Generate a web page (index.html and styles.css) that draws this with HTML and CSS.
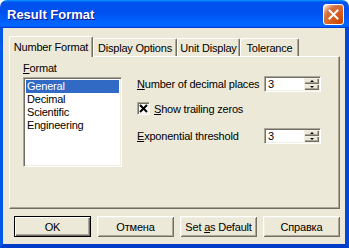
FILE: index.html
```html
<!DOCTYPE html>
<html>
<head>
<meta charset="utf-8">
<link rel="stylesheet" href="styles.css">
</head>
<body>
<div class="window">
  <div class="titlebar">
    <span class="title">Result Format</span>
    <div class="close">
      <svg width="11" height="11" viewBox="0 0 11 11"><path d="M1.5 1.5 L9.5 9.5 M9.5 1.5 L1.5 9.5" stroke="#fff" stroke-width="2" stroke-linecap="square"/></svg>
    </div>
  </div>
  <div class="client">
    <div class="tabs">
      <div class="tab active w1">Number Format</div>
      <div class="tab w2">Display Options</div>
      <div class="tab w3">Unit Display</div>
      <div class="tab w4">Tolerance</div>
    </div>
    <div class="panel">
      <div class="col-left">
        <div class="label"><u>F</u>ormat</div>
        <ul class="listbox">
          <li class="sel">General</li>
          <li>Decimal</li>
          <li>Scientific</li>
          <li>Engineering</li>
        </ul>
      </div>
      <div class="col-right">
        <div class="row">
          <span><u>N</u>umber of decimal places</span>
          <div class="spin"><span class="val">3</span><div class="spinbtns"><div class="sb up"></div><div class="sb down"></div></div></div>
        </div>
        <div class="check-row">
          <span class="checkbox"><svg width="9" height="9" viewBox="0 0 9 9"><path d="M1 1 L8 8 M8 1 L1 8" stroke="#000" stroke-width="2"/></svg></span>
          <span><u>S</u>how trailing zeros</span>
        </div>
        <div class="row row3">
          <span><u>E</u>xponential threshold</span>
          <div class="spin"><span class="val">3</span><div class="spinbtns"><div class="sb up"></div><div class="sb down"></div></div></div>
        </div>
      </div>
    </div>
    <div class="buttons">
      <div class="btn default"><span>OK</span></div>
      <div class="btn"><span>Отмена</span></div>
      <div class="btn"><span>Set <u>a</u>s Default</span></div>
      <div class="btn"><span>Справка</span></div>
    </div>
  </div>
</div>
</body>
</html>
```
FILE: styles.css
```css
html, body {
  margin: 0;
  padding: 0;
  background: #fff;
}
body {
  font-family: "Liberation Sans", Arial, sans-serif;
  font-size: 11px;
  letter-spacing: -0.2px;
  color: #000;
}
.window {
  width: 349px;
  height: 248px;
  display: flex;
  flex-direction: column;
  border-radius: 7px 7px 0 0;
  overflow: hidden;
}
.titlebar {
  flex: none;
  height: 28px;
  display: flex;
  align-items: center;
  padding: 0 5px 0 7px;
  background: linear-gradient(180deg, #0997ff, #0053ee 8%, #0050ee 40%, #0066ff 88%, #0066ff 93%, #005bff 95%, #003dd7 96%, #003dd7);
}
.title {
  font-family: "Liberation Sans", Arial, sans-serif;
  font-weight: bold;
  font-size: 13px;
  letter-spacing: 0;
  color: #fff;
  text-shadow: 1px 1px #0f1089;
  margin-top: 1px;
}
.close {
  margin-left: auto;
  width: 19px;
  height: 19px;
  border: 1px solid #fff;
  border-radius: 3px;
  display: flex;
  align-items: center;
  justify-content: center;
  background: radial-gradient(circle at 90% 90%, #cc4600 0, #dc6527 55%, #cd7546 70%, #ffccb2 90%, #fff 100%);
  margin-top: 1px;
}
.client {
  flex: 1;
  background: #ece9d8;
  border-left: 3px solid #0058e8;
  border-right: 4px solid #0046d8;
  border-bottom: 4px solid #003cc8;
  padding: 8px 5px 7px 6px;
  display: flex;
  flex-direction: column;
}
.tabs {
  height: 20px;
  display: flex;
  align-items: flex-end;
  flex: none;
}
.tab {
  height: 18px;
  box-sizing: border-box;
  border-top: 1px solid #fff;
  border-left: 1px solid #fff;
  border-right: 1px solid #716f64;
  box-shadow: inset -1px 0 #aca899;
  border-radius: 2px 2px 0 0;
  text-align: center;
  line-height: 16px;
  padding-top: 1px;
  background: #ece9d8;
}
.tab.active {
  height: 21px;
  margin-bottom: -1px;
  position: relative;
  z-index: 1;
  padding-top: 2px;
}
.w1 { width: 84px; }
.w2 { width: 84px; }
.w3 { width: 63px; }
.w4 { width: 59px; }
.panel {
  flex: 1;
  border: 1px solid;
  border-color: #fff #716f64 #716f64 #fff;
  box-shadow: inset -1px -1px #aca899;
  display: flex;
  padding: 5px 0 0 13px;
}
.label {
  line-height: 13px;
  height: 13px;
}
.listbox {
  list-style: none;
  margin: 2px 0 0 0;
  padding: 2px;
  width: 99px;
  height: 90px;
  box-sizing: border-box;
  background: #fff;
  border: 1px solid;
  border-color: #aca899 #fff #fff #aca899;
  box-shadow: inset 1px 1px #716f64, inset -1px -1px #f1efe2;
}
.listbox li {
  line-height: 13px;
  height: 13px;
  padding-left: 1px;
}
.listbox li.sel {
  background: #316ac5;
  color: #fff;
}
.col-right {
  margin-left: 15px;
  padding-top: 14px;
  display: flex;
  flex-direction: column;
}
.row {
  display: grid;
  grid-template-columns: 127px 57px;
  align-items: center;
  height: 16px;
}
.row3 {
  margin-top: 13px;
}
.spin {
  height: 16px;
  box-sizing: border-box;
  background: #fff;
  border: 1px solid;
  border-color: #aca899 #fff #fff #aca899;
  box-shadow: inset 1px 1px #716f64, inset -1px -1px #f1efe2;
  display: flex;
  align-items: center;
  padding: 1px 1px 1px 3px;
}
.val {
  flex: 1;
  line-height: 12px;
}
.spinbtns {
  width: 15px;
  height: 12px;
  display: flex;
  flex-direction: column;
}
.sb {
  flex: 1;
  background: #ece9d8;
  box-shadow: inset 1px 1px #f1efe2, inset -1px -1px #716f64, inset -2px -2px #aca899;
  display: flex;
  align-items: center;
  justify-content: center;
}
.sb::after {
  content: "";
  width: 0;
  height: 0;
  border-left: 2px solid transparent;
  border-right: 2px solid transparent;
}
.up::after { border-bottom: 2px solid #000; }
.down::after { border-top: 2px solid #000; }
.check-row {
  display: flex;
  align-items: center;
  height: 13px;
  margin-top: 10px;
}
.checkbox {
  width: 13px;
  height: 13px;
  box-sizing: border-box;
  background: #fff;
  border: 1px solid;
  border-color: #aca899 #fff #fff #aca899;
  box-shadow: inset 1px 1px #716f64, inset -1px -1px #f1efe2;
  display: flex;
  align-items: center;
  justify-content: center;
  margin-right: 4px;
}
.checkbox svg { display: block; }
.buttons {
  margin-top: 7px;
  display: flex;
  justify-content: flex-end;
  gap: 6px;
  flex: none;
}
.btn {
  width: 77px;
  height: 21px;
  box-sizing: border-box;
  display: flex;
  align-items: center;
  justify-content: center;
  background: #ece9d8;
  box-shadow: inset 1px 1px #fff, inset -1px -1px #716f64, inset 2px 2px #f1efe2, inset -2px -2px #aca899;
}
.btn.default {
  border: 1px solid #000;
  box-shadow: inset 1px 1px #fff, inset -1px -1px #716f64, inset -2px -2px #aca899;
}
```
